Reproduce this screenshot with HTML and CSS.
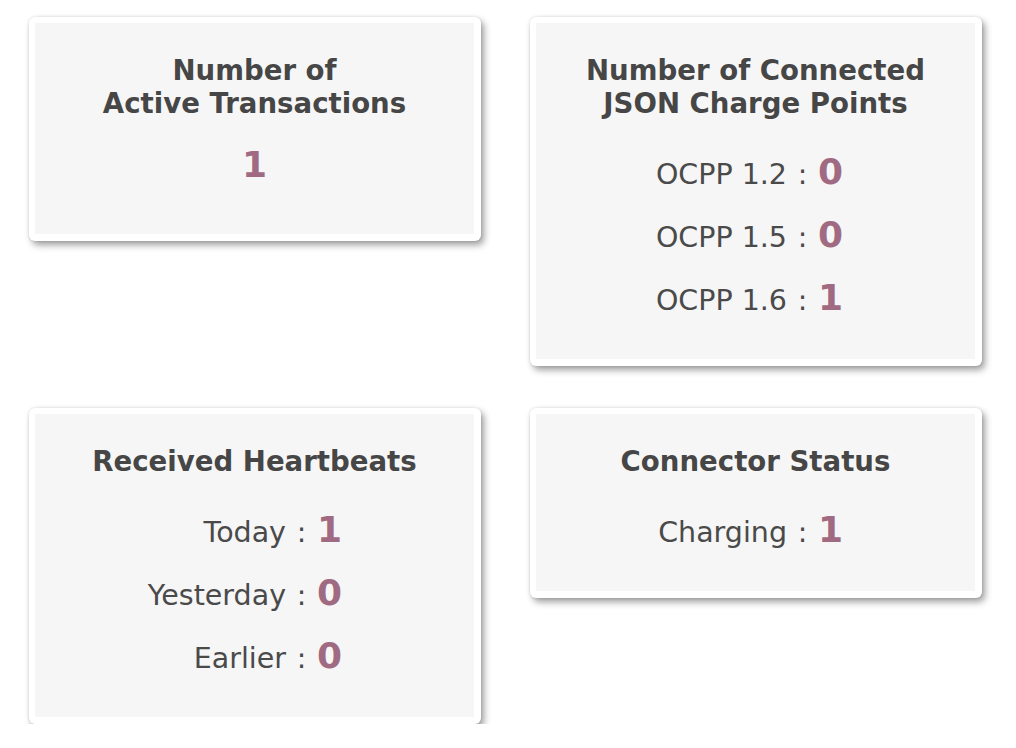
FILE: index.html
```html
<!DOCTYPE html>
<html>
<head>
<meta charset="utf-8">
<link rel="stylesheet" href="styles.css">
</head>
<body>
<div class="dashboard">
  <div class="card">
    <div class="panel panel-single">
      <h2 class="title">Number of<br>Active Transactions</h2>
      <div class="big">1</div>
    </div>
  </div>
  <div class="card">
    <div class="panel">
      <h2 class="title">Number of Connected<br>JSON Charge Points</h2>
      <div class="stats">
        <span class="label">OCPP 1.2</span><span class="colon">:</span><span class="value">0</span>
        <span class="label">OCPP 1.5</span><span class="colon">:</span><span class="value">0</span>
        <span class="label">OCPP 1.6</span><span class="colon">:</span><span class="value">1</span>
      </div>
    </div>
  </div>
  <div class="card">
    <div class="panel">
      <h2 class="title">Received Heartbeats</h2>
      <div class="stats">
        <span class="label">Today</span><span class="colon">:</span><span class="value">1</span>
        <span class="label">Yesterday</span><span class="colon">:</span><span class="value">0</span>
        <span class="label">Earlier</span><span class="colon">:</span><span class="value">0</span>
      </div>
    </div>
  </div>
  <div class="card">
    <div class="panel">
      <h2 class="title">Connector Status</h2>
      <div class="stats">
        <span class="label">Charging</span><span class="colon">:</span><span class="value">1</span>
      </div>
    </div>
  </div>
</div>
</body>
</html>
```

FILE: styles.css
```css
html, body {
  margin: 0;
  padding: 0;
  background: #ffffff;
}

body {
  font-family: "DejaVu Sans", Verdana, sans-serif;
  color: #4a4a4a;
}

.dashboard {
  display: grid;
  grid-template-columns: 452px 452px;
  column-gap: 49px;
  row-gap: 42px;
  align-items: start;
  padding: 17px 0 0 29px;
}

.card {
  background: #ffffff;
  border-radius: 6px;
  padding: 6px 7px 7px 6px;
  box-shadow: 3px 4px 7px rgba(0, 0, 0, 0.38), 0 0 3px rgba(0, 0, 0, 0.12);
}

.panel {
  background: #f6f6f6;
  padding: 31px 0 19px;
  text-align: center;
}

.panel-single {
  padding-bottom: 48px;
}

.title {
  margin: 0;
  font-size: 27.6px;
  line-height: 33px;
  font-weight: bold;
  color: #464646;
}

.big {
  margin-top: 24px;
  font-size: 36px;
  line-height: 42px;
  font-weight: bold;
  color: #a06b82;
}

.stats {
  margin-top: 31px;
  display: grid;
  grid-template-columns: 251px 31px 1fr;
  grid-auto-rows: 63px;
  align-items: baseline;
}

.label {
  text-align: right;
  font-size: 28.5px;
  line-height: 42px;
  color: #4a4a4a;
}

.colon {
  text-align: center;
  font-size: 28.5px;
  line-height: 42px;
  color: #4a4a4a;
}

.value {
  text-align: left;
  font-size: 36px;
  line-height: 42px;
  font-weight: bold;
  color: #a06b82;
}
```
